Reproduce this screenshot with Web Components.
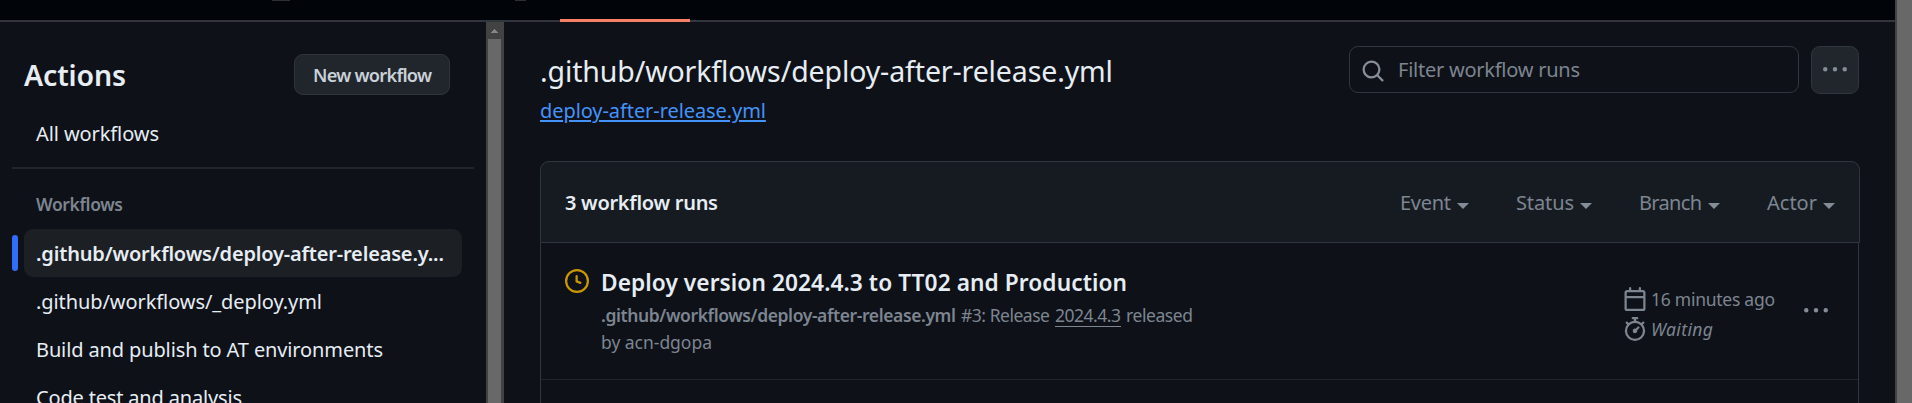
<!DOCTYPE html>
<html lang="en"><head><meta charset="utf-8"><title>Actions</title>
<style>
html,body{margin:0;height:403px;overflow:hidden;background:#0e1118}
body{font-family:"Noto Sans","Open Sans",sans-serif;color:#e6edf3}
</style></head><body>
<actions-page></actions-page>
<script>
const define=(name,html,ready)=>{
  const t=document.createElement('template');t.innerHTML=html;
  customElements.define(name,class extends HTMLElement{
    connectedCallback(){
      if(this.shadowRoot)return;
      this.attachShadow({mode:'open'}).append(t.content.cloneNode(true));
      if(ready)ready.call(this,this.shadowRoot);
    }
  });
};

/* Text run whose tracking is adjusted to fill the width given in "w". */
define('fit-text','<style>:host{display:block;white-space:nowrap;flex:none}span{display:inline-block;white-space:pre;text-decoration:var(--line,none);text-underline-offset:2px}:host([snug]){margin-left:-1px}</style><span><slot></slot></span>',function(r){
  const s=r.querySelector('span'),w=+this.getAttribute('w');
  this.style.width=w+'px';
  const n=this.textContent.length;
  s.style.letterSpacing='0.001px';
  s.style.letterSpacing=((w-s.getBoundingClientRect().width)/(n-1)).toFixed(4)+'px';
});

const icons={
 clock:'<path d="M8 0a8 8 0 1 1 0 16A8 8 0 0 1 8 0ZM1.5 8a6.5 6.5 0 1 0 13 0 6.5 6.5 0 0 0-13 0Zm7-3.25v2.992l2.028.812a.75.75 0 0 1-.557 1.392l-2.5-1A.751.751 0 0 1 7 8.25v-3.5a.75.75 0 0 1 1.5 0Z"/>',
 search:'<path d="M10.68 11.74a6 6 0 0 1-7.922-8.982 6 6 0 0 1 8.982 7.922l3.04 3.04a.749.749 0 0 1-.326 1.275.749.749 0 0 1-.734-.215ZM11.5 7a4.499 4.499 0 1 0-8.997 0A4.499 4.499 0 0 0 11.5 7Z"/>',
 kebab:'<path d="M8 9a1.5 1.5 0 1 0 0-3 1.5 1.5 0 0 0 0 3ZM1.5 9a1.5 1.5 0 1 0 0-3 1.5 1.5 0 0 0 0 3Zm13 0a1.5 1.5 0 1 0 0-3 1.5 1.5 0 0 0 0 3Z"/>',
 calendar:'<path d="M4.75 0a.75.75 0 0 1 .75.75V2h5V.75a.75.75 0 0 1 1.5 0V2h1.25c.966 0 1.75.784 1.75 1.75v10.5A1.75 1.75 0 0 1 13.25 16H2.75A1.75 1.75 0 0 1 1 14.25V3.75C1 2.784 1.784 2 2.75 2H4V.75A.75.75 0 0 1 4.75 0ZM2.5 7.5v6.75c0 .138.112.25.25.25h10.5a.25.25 0 0 0 .25-.25V7.5Zm10.75-4H2.75a.25.25 0 0 0-.25.25V6h11V3.75a.25.25 0 0 0-.25-.25Z"/>',
 stopwatch:'<path d="M5.75.75A.75.75 0 0 1 6.5 0h3a.75.75 0 0 1 0 1.5h-.75v1l-.001.041a6.724 6.724 0 0 1 3.464 1.435l.007-.006.75-.75a.749.749 0 0 1 1.275.326.749.749 0 0 1-.215.734l-.75.75-.006.007a6.75 6.75 0 1 1-10.548 0L2.72 5.03l-.75-.75a.751.751 0 0 1 .018-1.042.751.751 0 0 1 1.042-.018l.75.75.007.006A6.72 6.72 0 0 1 7.25 2.541V1.5H6.5a.75.75 0 0 1-.75-.75ZM8 14.5a5.25 5.25 0 1 0-.001-10.501A5.25 5.25 0 0 0 8 14.5Zm.389-6.7 1.33-1.33a.75.75 0 1 1 1.061 1.06L9.45 8.861A1.503 1.503 0 0 1 8 10.75a1.499 1.499 0 1 1 .389-2.95Z"/>'
};
define('oct-icon','<style>:host{display:block;width:24px;height:24px;flex:none}svg{display:block;width:100%;height:100%;fill:currentColor}</style><svg viewBox="0 0 16 16"></svg>',function(r){
  r.querySelector('svg').innerHTML=icons[this.getAttribute('name')];
});

define('page-tabs',`<style>:host{display:flex;height:22px;box-sizing:border-box;background:#010409;border-bottom:2px solid #30363d;padding-left:272px}
b{width:18px;height:1px;background:#2b3038;flex:none}b+b{width:11px;margin-left:225px;margin-right:34px}
i{width:130px;height:3px;margin-top:19px;background:#f78166;flex:none}</style><b></b><b></b><i></i>`);

define('scroll-rail',`<style>:host{display:block;width:18px;box-sizing:border-box;background:#424242;flex:none;padding:7px 3px 0 2px}
svg{display:block;width:7px;height:4px;margin:0 auto 6px;fill:#868686}i{display:block;background:#686868;height:400px}</style>
<svg viewBox="0 0 7 4"><path d="M3 0h1v1h1v1h1v1h1v1H0V3h1V2h1V1h1z"/></svg><i></i>`);

define('nav-item',`<style>:host{display:flex;height:48px;align-items:center;padding-left:12px;box-sizing:border-box;gap:6px;font-size:20px;line-height:50px;color:#e6edf3}
i{width:6px;height:36px;border-radius:3px;flex:none}div{width:438px;height:48px;border-radius:9px;padding-left:12px;box-sizing:border-box}
:host([current]){font-weight:600}:host([current]) i{background:#316dfa}:host([current]) div{background:#1c1f24}</style><i></i><div><slot></slot></div>`);

define('side-nav',`<style>:host{display:block;width:486px;flex:none;padding-top:32px;box-sizing:border-box;overflow:hidden}
header{display:flex;justify-content:space-between;align-items:center;padding:0 36px 0 24px;margin-bottom:14px}
h2{margin:0;font-size:28.5px;height:41px;line-height:43px;font-weight:600;color:#e6edf3}
button{all:unset;box-sizing:border-box;width:156px;height:41px;border:1px solid #30353c;border-radius:9px;background:#21262d;color:#c9d1d9;font-size:18.2px;line-height:40px;font-weight:600;padding-left:18px}
hr{border:0;height:2px;background:#21262d;margin:10px 12px 23px}
.label{font-size:17.5px;line-height:25px;font-weight:600;color:#7d8590;padding-left:36px;margin-bottom:12px}</style>
<header><h2><fit-text w="102">Actions</fit-text></h2><button><fit-text w="119">New workflow</fit-text></button></header>
<nav-item><fit-text w="123">All workflows</fit-text></nav-item><hr>
<div class="label"><fit-text w="87">Workflows</fit-text></div>
<nav-item current><fit-text w="408">.github/workflows/deploy-after-release.y...</fit-text></nav-item>
<nav-item><fit-text w="286">.github/workflows/_deploy.yml</fit-text></nav-item>
<nav-item><fit-text w="347">Build and publish to AT environments</fit-text></nav-item>
<nav-item><fit-text w="206">Code test and analysis</fit-text></nav-item>`);

define('run-search',`<style>:host{display:flex;gap:12px;color:#7d8590}
.box{box-sizing:border-box;width:450px;height:47px;border:1px solid #30363d;border-radius:9px;display:flex;align-items:center;padding-left:11px;gap:14px;font-size:20px;line-height:49px}
.box oct-icon{color:#868e98;margin-top:3px}
.more{box-sizing:border-box;width:48px;height:48px;border:1px solid #30363d;border-radius:9px;background:#21262d;display:grid;place-items:center;color:#848d97}</style>
<div class="box"><oct-icon name="search"></oct-icon><fit-text snug w="182">Filter workflow runs</fit-text></div>
<div class="more"><oct-icon name="kebab"></oct-icon></div>`);

define('filter-menu',`<style>:host{display:flex;align-items:center;gap:6px;font-size:20px;line-height:30px;color:#7d8590}
i{border:6px solid transparent;border-top-color:#848d97;border-bottom:0;margin-top:5px}</style><slot></slot><i></i>`);

define('run-list',`<style>:host{display:block}
header{box-sizing:border-box;height:82px;margin-right:-1px;border:1px solid #30363d;border-radius:9px 9px 0 0;background:#161b22;display:flex;align-items:center;padding:2px 24px 0;font-size:20px;line-height:30px}
b{font-weight:600;margin-right:auto}nav{display:flex;gap:47px}
section{border:solid #30363d;border-width:0 1px;height:200px}</style>
<header><b><fit-text w="153">3 workflow runs</fit-text></b><nav>
<filter-menu><fit-text w="51">Event</fit-text></filter-menu><filter-menu><fit-text w="58">Status</fit-text></filter-menu>
<filter-menu><fit-text w="63">Branch</fit-text></filter-menu><filter-menu><fit-text w="50">Actor</fit-text></filter-menu></nav></header>
<section><slot></slot></section>`);

define('workflow-run',`<style>:host{display:flex;box-sizing:border-box;height:137px;border-bottom:1px solid #21262d;padding:26px 30px 0 24px;color:#7d8590;font-size:17.5px}
.state{color:#c99700;margin-right:12px}
.body{flex:1}h3{margin:0;font-size:22.7px;height:33px;line-height:28px;font-weight:600;color:#e6edf3}
.meta{display:flex;line-height:27px;gap:5px}.meta b{font-weight:600}
.ref{border-bottom:1px solid #7d8590;height:24px}
.time{width:150px;padding-top:18px;margin-right:31px}.time div{display:flex;gap:5px;height:30px;line-height:24px;align-items:flex-start}
em{font-style:italic}.more{margin-top:30px;color:#848d97}</style>
<oct-icon class="state" name="clock"></oct-icon>
<div class="body"><h3><fit-text w="526">Deploy version 2024.4.3 to TT02 and Production</fit-text></h3>
<div class="meta"><b><fit-text w="355">.github/workflows/deploy-after-release.yml</fit-text></b><fit-text w="89">#3: Release</fit-text><fit-text class="ref" w="66">2024.4.3</fit-text><fit-text w="67">released</fit-text></div>
<div class="meta"><fit-text w="111">by acn-dgopa</fit-text></div></div>
<div class="time"><div><oct-icon name="calendar"></oct-icon><fit-text snug w="124">16 minutes ago</fit-text></div><div><oct-icon name="stopwatch"></oct-icon><em><fit-text snug w="62">Waiting</fit-text></em></div></div>
<oct-icon class="more" name="kebab"></oct-icon>`);

define('runs-main',`<style>:host{display:block;flex:1;padding:24px 36px 0;overflow:hidden}
.top{display:flex;justify-content:space-between;height:115px}
h1{margin:0;font-size:28.5px;line-height:50px;font-weight:400}
a{display:block;color:#4493f8;font-size:20px;line-height:30px;--line:underline 2px}</style>
<div class="top"><div><h1><fit-text w="573">.github/workflows/deploy-after-release.yml</fit-text></h1><a><fit-text w="226">deploy-after-release.yml</fit-text></a></div><run-search></run-search></div>
<run-list><workflow-run></workflow-run></run-list>`);

define('actions-page',`<style>:host{display:flex;height:403px;overflow:hidden}
.app{width:1895px;flex:none}.cols{display:flex;height:381px}
aside{width:15px;border-left:2px solid #424242;background:#686868}</style>
<div class="app"><page-tabs></page-tabs><div class="cols"><side-nav></side-nav><scroll-rail></scroll-rail><runs-main></runs-main></div></div><aside></aside>`);
</script></body></html>
